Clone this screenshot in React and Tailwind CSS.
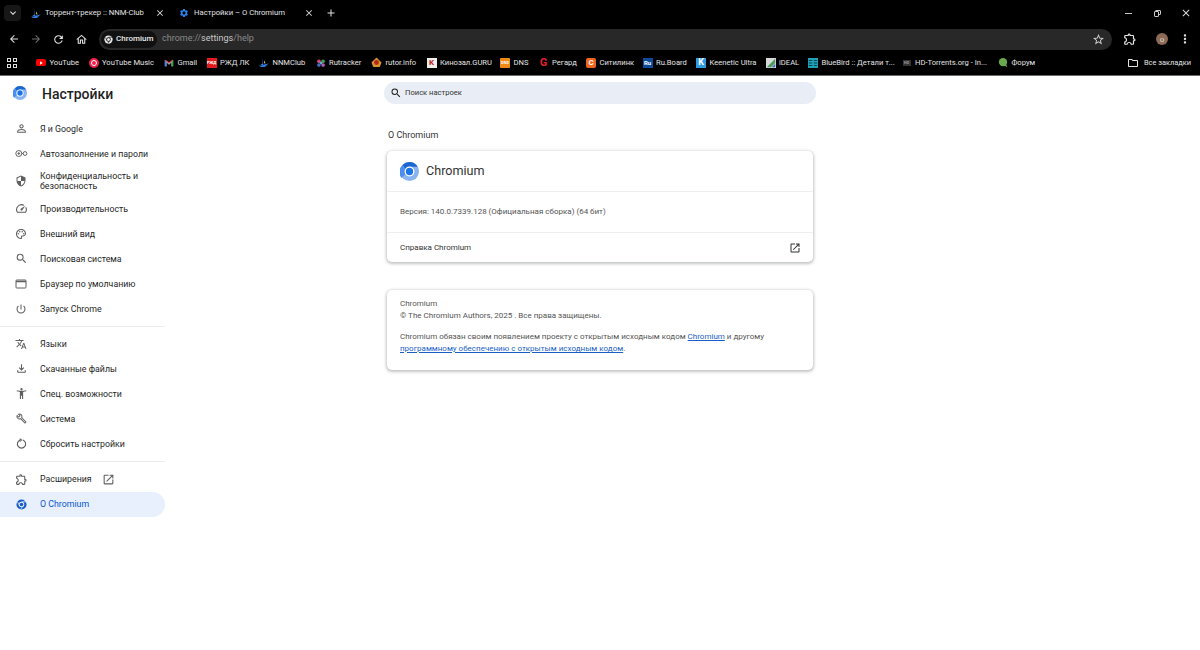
import React from "react";
import {
  MdPersonOutline, MdOutlineSecurity, MdOutlineSpeed, MdOutlinePalette, MdSearch, MdPowerSettingsNew,
  MdTranslate, MdOutlineFileDownload, MdAccessibilityNew, MdOutlineBuild, MdOutlineExtension, MdOpenInNew,
  MdClose, MdAdd, MdArrowBack, MdArrowForward, MdRefresh, MdOutlineHome, MdStarBorder, MdKeyboardArrowDown,
  MdMoreVert, MdOutlineFolder, MdSettings, MdPlayArrow,
} from "react-icons/md";

const ChromeLogo = ({ size = 14 }) => (
  <svg width={size} height={size} viewBox="0 0 24 24" className="shrink-0">
    <circle cx="12" cy="12" r="12" fill="#8ab4f0" />
    <path d="M12 0a12 12 0 0 1 10.4 6H12a6 6 0 0 0-5.2 3L3.2 3.7A12 12 0 0 1 12 0z" fill="#1a67d2" />
    <path d="M3.2 3.7 6.8 9a6 6 0 0 0 .1 6l-5 5.3A12 12 0 0 1 3.2 3.7z" fill="#4c8df0" />
    <circle cx="12" cy="12" r="6.2" fill="#fff" />
    <circle cx="12" cy="12" r="4.6" fill="#1a73e8" />
  </svg>
);

const ChromeMono = ({ size = 12, color = "#fff", inner = "#000" }) => (
  <svg width={size} height={size} viewBox="0 0 24 24" className="shrink-0">
    <circle cx="12" cy="12" r="11" fill={color} />
    <circle cx="12" cy="12" r="6" fill={inner} />
    <circle cx="12" cy="12" r="4" fill={color} />
    <path d="M12 6h10M8 15 3 6M15 15l-5 8" stroke={inner} strokeWidth="1.6" />
  </svg>
);

const NnmIcon = () => (
  <svg width="11" height="11" viewBox="0 0 12 12" className="shrink-0">
    <path d="M5.4.5 5 7 1 9.8 5.6 8.4z" fill="#3f8ef0" />
    <path d="M5.5 8.5 11.5 7.2 7.5 11 1.5 11z" fill="#2f7ce0" />
    <path d="M7 3.5 8.2 7 6.6 6.8z" fill="#f0d060" />
  </svg>
);

const Favicon = ({ kind }) => {
  const box = "w-[10px] h-[10px] shrink-0 flex items-center justify-center";
  switch (kind) {
    case "yt":
      return <span className={box}><span className="w-[10px] h-[7px] rounded-[2px] bg-[#f00] flex items-center justify-center"><MdPlayArrow className="text-white" size={6} /></span></span>;
    case "ytm":
      return <span className={box}><span className="w-[10px] h-[10px] rounded-full bg-[#f01f4a] flex items-center justify-center"><span className="w-[6px] h-[6px] rounded-full border border-white" /></span></span>;
    case "gmail":
      return (
        <svg width="10" height="10" viewBox="0 0 12 12" className="shrink-0">
          <path d="M1 2.5 6 6.5 11 2.5V10H9V5.5L6 8 3 5.5V10H1z" fill="#c9c9d0" />
          <path d="M1 2.5 3 4v6H1z" fill="#4285f4" />
          <path d="M9 4l2-1.5V10H9z" fill="#34a853" />
          <path d="M1 2.5 2 2 6 5 10 2l1 .5L6 6.5z" fill="#ea4335" />
        </svg>
      );
    case "rzd":
      return <span className={`${box} bg-[#e21a1a] text-white text-[4px] font-bold`}>РЖД</span>;
    case "nnm":
      return <NnmIcon />;
    case "rut":
      return (
        <svg width="10" height="10" viewBox="0 0 12 12" className="shrink-0">
          <circle cx="3.5" cy="4" r="2.2" fill="#d34a7a" />
          <circle cx="8.5" cy="4" r="2.2" fill="#4a9a5a" />
          <circle cx="3.5" cy="8.5" r="2.2" fill="#3f6fc0" />
          <circle cx="8.5" cy="8.5" r="2.2" fill="#b05ac0" />
          <circle cx="6" cy="6" r="1.6" fill="#5fb0c0" />
        </svg>
      );
    case "rutor":
      return (
        <svg width="11" height="11" viewBox="0 0 12 12" className="shrink-0">
          <path d="M6 .5 11.5 6 9.5 11h-7L.5 6z" fill="#d9932a" />
          <circle cx="6" cy="6" r="2.6" fill="#b0281e" />
        </svg>
      );
    case "kino":
      return <span className={`${box} bg-[#eee] text-[#c0201a] text-[8px] font-bold leading-none`}>K</span>;
    case "dns":
      return <span className={`${box} bg-[#f08a16] rounded-[1px] text-white text-[4px] font-bold`}>DNS</span>;
    case "regard":
      return <span className={`${box} text-[#e3202c] text-[11px] font-bold leading-none`}>G</span>;
    case "citi":
      return <span className={`${box} bg-[#f0641e] rounded-[2px] text-white text-[8px] font-bold leading-none`}>C</span>;
    case "ru":
      return <span className={`${box} bg-[#0d4a9a] text-white text-[6px] font-bold leading-none`}>Ru</span>;
    case "keen":
      return <span className={`${box} bg-[#2f9be0] text-white text-[9px] font-bold leading-none`}>K</span>;
    case "ideal":
      return (
        <svg width="10" height="10" viewBox="0 0 12 12" className="shrink-0">
          <rect width="12" height="12" fill="#d8d8d8" />
          <path d="M1 11 11 1v5L6 11z" fill="#4a9a5a" />
          <path d="M7 11l4-4v4z" fill="#3a6ac0" />
        </svg>
      );
    case "blue":
      return (
        <svg width="10" height="10" viewBox="0 0 12 12" className="shrink-0">
          <rect width="12" height="12" fill="#1ea0b8" />
          <path d="M1 3h4M1 6h4M1 9h4M7 3h4M7 6h4M7 9h4" stroke="#0a2a3a" strokeWidth="1" />
        </svg>
      );
    case "hd":
      return <span className={box}><span className="w-[8px] h-[6px] bg-[#333] text-[#999] text-[4px] font-bold leading-[6px] text-center">HD</span></span>;
    case "forum":
      return (
        <svg width="10" height="11" viewBox="0 0 12 12" className="shrink-0">
          <circle cx="6" cy="5.5" r="5" fill="#6aa84f" />
          <path d="M7 9l4 3-1-4z" fill="#6aa84f" />
        </svg>
      );
    default:
      return null;
  }
};

const bookmarks = [
  ["yt", "YouTube", "w-[29px]"], ["ytm", "YouTube Music", "w-[52px]"], ["gmail", "Gmail", "w-[19px]"], ["rzd", "РЖД ЛК", "w-[28px]"], ["nnm", "NNMClub", "w-[33px]"],
  ["rut", "Rutracker", "w-[32px]"], ["rutor", "rutor.info", "w-[31px]"], ["kino", "Кинозал.GURU", "w-[50px]"], ["dns", "DNS", "w-[15px]"], ["regard", "Регард", "w-[24px]"],
  ["citi", "Ситилинк", "w-[33px]"], ["ru", "Ru.Board", "w-[30px]"], ["keen", "Keenetic Ultra", "w-[46px]"], ["ideal", "iDEAL", "w-[19px]"],
  ["blue", "BlueBird :: Детали т...", "w-[70px]"], ["hd", "HD-Torrents.org - In...", "w-[73px]"], ["forum", "Форум", "w-[24px]"],
];

const AutofillIcon = () => (
  <svg width="13" height="13" viewBox="0 0 24 24" fill="none" stroke="currentColor" strokeWidth="1.8">
    <circle cx="7" cy="12" r="5.5" />
    <circle cx="7" cy="12" r="1.5" fill="currentColor" />
    <circle cx="18.5" cy="12" r="3.5" />
    <path d="M12.5 12h2.5" />
  </svg>
);
const BrowserIcon = () => (
  <svg width="12" height="12" viewBox="0 0 24 24" fill="none" stroke="currentColor" strokeWidth="2">
    <rect x="2" y="4" width="20" height="16" rx="1.5" />
    <path d="M2 7h20" strokeWidth="3" />
  </svg>
);
const ResetIcon = () => (
  <svg width="11" height="11" viewBox="0 0 24 24" fill="none" stroke="currentColor" strokeWidth="2.4">
    <path d="M9 4.5a9 9 0 1 0 6 0" />
    <path d="M8 1.5l4 3-4 3" />
  </svg>
);

const iconCls = "text-[#5f5f5f]";
const nav = [
  [<MdPersonOutline size={13} />, "Я и Google"],
  [<AutofillIcon />, "Автозаполнение и пароли"],
  [<MdOutlineSecurity size={12} />, "Конфиденциальность и безопасность", "tall"],
  [<MdOutlineSpeed size={13} />, "Производительность"],
  [<MdOutlinePalette size={12} />, "Внешний вид"],
  [<MdSearch size={13} />, "Поисковая система"],
  [<BrowserIcon />, "Браузер по умолчанию"],
  [<MdPowerSettingsNew size={12} />, "Запуск Chrome"],
  "d",
  [<MdTranslate size={12} />, "Языки"],
  [<MdOutlineFileDownload size={13} />, "Скачанные файлы"],
  [<MdAccessibilityNew size={13} />, "Спец. возможности"],
  [<MdOutlineBuild size={11} />, "Система"],
  [<ResetIcon />, "Сбросить настройки"],
  "d2",
];

const NavRow = ({ icon, label, tall }) => (
  <div className={`flex items-center pl-[13px] ${tall ? "h-[30px]" : "h-[25px]"}`}>
    <span className={`w-[16px] flex justify-center shrink-0 ${iconCls}`}>{icon}</span>
    <span className="ml-[11px] text-[8.8px] leading-[10px] text-[#1f1f1f] w-[112px]">{label}</span>
  </div>
);

export default function App() {
  return (
    <div className="w-[1200px] h-[650px] overflow-hidden bg-white flex flex-col font-['Roboto','Noto_Sans',sans-serif]">
      <header className="bg-black text-[#e3e3e3] h-[76px] shrink-0 border-b border-[#6a6a6a] flex flex-col">
        {/* tab strip */}
        <div className="h-[26px] flex items-center text-[7.7px] pl-[4px]">
          <span className="w-[17px] h-[16px] rounded-[4px] bg-[#171717] flex items-center justify-center">
            <MdKeyboardArrowDown size={12} />
          </span>
          <span className="ml-[9px] w-[10px] flex justify-center"><NnmIcon /></span>
          <span className="ml-[5px] w-[110px] whitespace-nowrap">Торрент-трекер :: NNM-Club</span>
          <MdClose size={10} />
          <span className="ml-[14px] w-[10px] flex justify-center"><MdSettings size={12} className="text-[#2f7fe8]" /></span>
          <span className="ml-[5px] w-[110px] whitespace-nowrap">Настройки – О Chromium</span>
          <MdClose size={10} />
          <MdAdd size={12} className="ml-[11px]" />
          <div className="ml-auto flex items-center gap-[17px] pr-[8px]">
            <span className="w-[12px] flex justify-center"><span className="w-[7px] h-px bg-[#c8c8c8]" /></span>
            <span className="w-[12px] flex justify-center">
              <span className="relative w-[7px] h-[7px]">
                <span className="absolute left-[1.5px] top-0 w-[5.5px] h-[5.5px] border border-[#c8c8c8] rounded-[1px]" />
                <span className="absolute left-0 top-[1.5px] w-[5.5px] h-[5.5px] border border-[#c8c8c8] rounded-[1px] bg-black" />
              </span>
            </span>
            <MdClose size={12} className="text-[#d8d8d8]" />
          </div>
        </div>
        {/* toolbar */}
        <div className="h-[26px] flex items-center pl-[8px]">
          <MdArrowBack size={12} />
          <MdArrowForward size={12} className="ml-[10px] text-[#6e6e6e]" />
          <MdRefresh size={13} className="ml-[10px]" />
          <MdOutlineHome size={13} className="ml-[10px]" />
          <div className="ml-[11px] w-[1013px] h-[21px] rounded-full bg-[#282828] flex items-center pl-[2px] pr-[7px]">
            <span className="w-[56px] h-[17px] rounded-full bg-[#111] flex items-center pl-[3px] gap-[3px] text-[8px] font-medium text-[#e8e8e8]">
              <ChromeMono size={9} color="#e8e8e8" inner="#111" />
              Chromium
            </span>
            <span className="ml-[5px] text-[9px] text-[#8a8a8a]">chrome://<span className="text-[#c8c8c8]">settings</span>/help</span>
            <MdStarBorder size={13} className="ml-auto text-[#d8d8d8]" />
          </div>
          <MdOutlineExtension size={14} className="ml-[11px]" />
          <span className="ml-[19px] w-[12px] h-[12px] rounded-full bg-[#8c6a55] text-[6px] flex items-center justify-center text-[#eee]">О</span>
          <MdMoreVert size={14} className="ml-[10px]" />
        </div>
        {/* bookmarks */}
        <div className="flex-1 flex items-center pl-[7px] pr-[9px] pb-px text-[7.6px] text-[#e3e3e3] whitespace-nowrap">
          <span className="grid grid-cols-2 gap-[1.5px] mr-[19px] w-[10px]">
            <span className="w-[4px] h-[4px] border border-[#ddd]" />
            <span className="w-[4px] h-[4px] border border-[#ddd]" />
            <span className="w-[4px] h-[4px] border border-[#ddd]" />
            <span className="w-[4px] h-[4px] border border-[#ddd]" />
          </span>
          <div className="flex items-center gap-[10px]">
            {bookmarks.map(([k, t, w]) => (
              <span key={t} className="flex items-center gap-[3.5px]">
                <Favicon kind={k} />
                <span className={w}>{t}</span>
              </span>
            ))}
          </div>
          <span className="ml-auto flex items-center gap-[5px] text-[7.4px]">
            <MdOutlineFolder size={12} />
            Все закладки
          </span>
        </div>
      </header>

      <div className="flex-1 grid grid-cols-[165px_219px_432px]">
        <aside>
          <div className="h-[40px] flex items-start pt-[10px] pl-[13px]">
            <ChromeLogo size={14} />
            <span className="ml-[15px] -mt-[1px] text-[14px] leading-[18px] font-medium text-[#1f1f1f]">Настройки</span>
          </div>
          {nav.map((n, i) =>
            n === "d" ? (
              <div key={i} className="h-[10px] flex items-center"><div className="w-full h-px bg-[#ececec]" /></div>
            ) : n === "d2" ? (
              <div key={i} className="h-[11px] flex items-center"><div className="w-full h-px bg-[#ececec]" /></div>
            ) : (
              <NavRow key={i} icon={n[0]} label={n[1]} tall={n[2]} />
            )
          )}
          <div className="h-[25px] flex items-center pl-[13px]">
            <span className={`w-[16px] flex justify-center ${iconCls}`}><MdOutlineExtension size={13} /></span>
            <span className="ml-[11px] text-[8.8px] text-[#1f1f1f]">Расширения</span>
            <MdOpenInNew size={13} className={`ml-[10px] ${iconCls}`} />
          </div>
          <div className="h-[25px] flex items-center pl-[13px] bg-[#e8f0fe] rounded-r-full">
            <span className="w-[16px] flex justify-center"><ChromeMono size={11} color="#1a5fc8" inner="#e8f0fe" /></span>
            <span className="ml-[11px] text-[8.8px] text-[#0b57d0]">О Chromium</span>
          </div>
        </aside>
        <div />
        <main className="pt-[6px]">
          <div className="h-[22px] rounded-full bg-[#e9eef6] flex items-center pl-[6px] text-[#474747]">
            <MdSearch size={12} className="text-[#1f1f1f]" />
            <span className="ml-[3px] text-[7.6px] text-[#333]">Поиск настроек</span>
          </div>
          <div className="mx-[3px]">
            <h2 className="mt-[25px] h-[12px] leading-[12px] text-[9px] font-normal text-[#333] pl-px">О Chromium</h2>
            <section className="mt-[10px] h-[111px] rounded-[5px] bg-white shadow-[0_1px_3px_1px_rgba(60,64,67,0.3)] text-[8px] text-[#555]">
              <div className="h-[41px] flex items-center pl-[13px] border-b border-[#eeeeee]">
                <ChromeLogo size={19} />
                <span className="ml-[7px] text-[12.6px] text-[#333]">Chromium</span>
              </div>
              <div className="h-[41px] flex items-center pl-[13px] border-b border-[#eeeeee]">
                Версия: 140.0.7339.128 (Официальная сборка) (64 бит)
              </div>
              <div className="h-[29px] flex items-center pl-[13px] pr-[12px] text-[#333]">
                Справка Chromium
                <MdOpenInNew size={12} className="ml-auto text-[#333]" />
              </div>
            </section>
            <section className="mt-[28px] h-[80px] rounded-[5px] bg-white shadow-[0_1px_3px_1px_rgba(60,64,67,0.3)] px-[13px] pt-[8px] text-[8px] leading-[12px] text-[#555]">
              <div>Chromium</div>
              <div>© The Chromium Authors, 2025 . Все права защищены.</div>
              <div className="mt-[9px]">
                Chromium обязан своим появлением проекту с открытым исходным кодом{" "}
                <span className="text-[#1a5fc8] underline">Chromium</span> и другому{" "}
                <span className="text-[#1a5fc8] underline">программному обеспечению с открытым исходным кодом</span>.
              </div>
            </section>
          </div>
        </main>
      </div>
    </div>
  );
}
